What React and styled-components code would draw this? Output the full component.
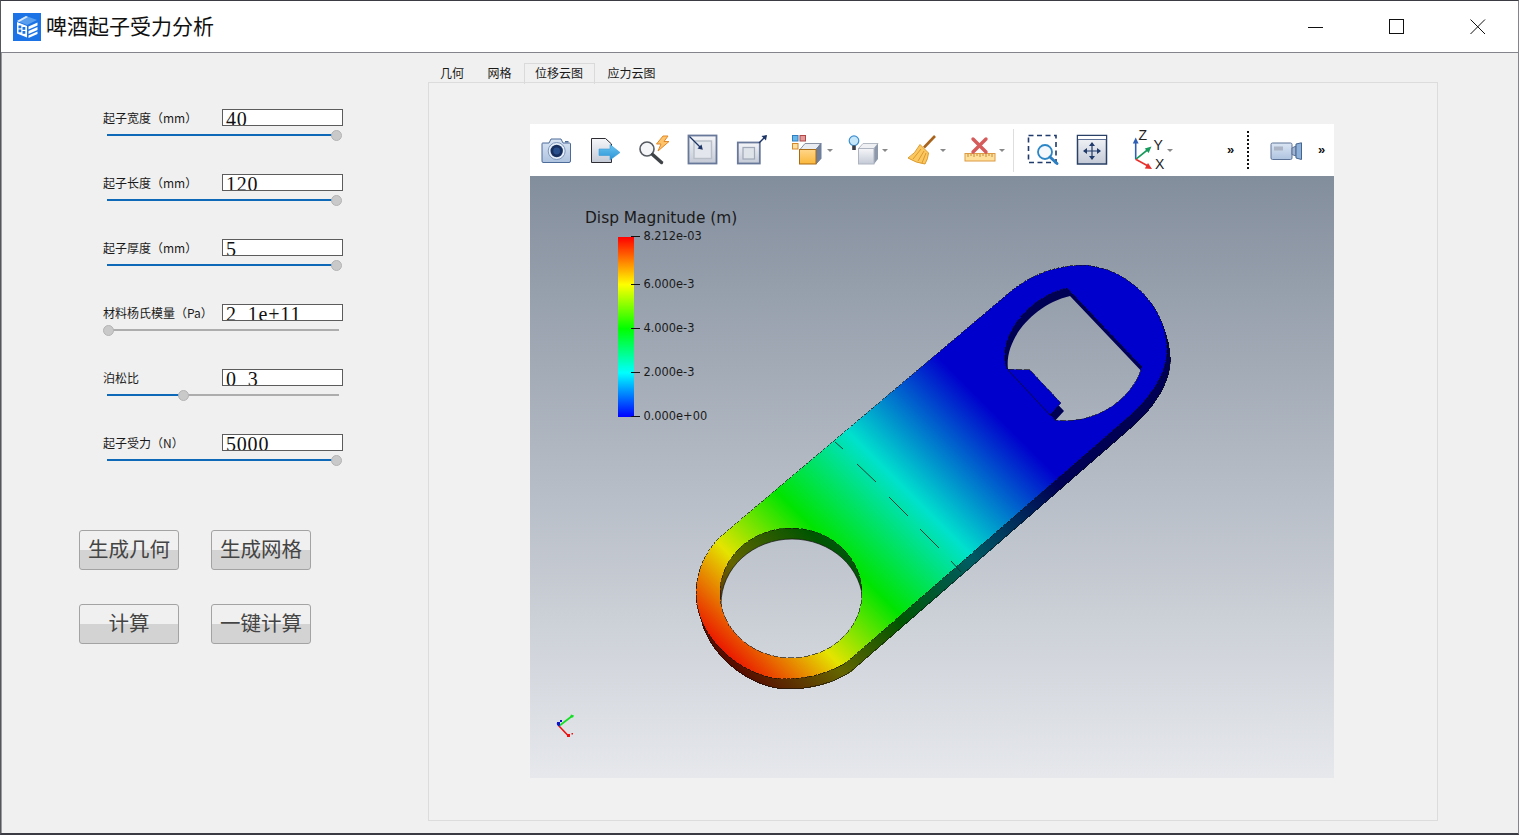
import React from "react";
import styled, { createGlobalStyle } from "styled-components";

const Global = createGlobalStyle`
  html, body { margin: 0; padding: 0; background: #f0f0f0; }
  body { font-family: "Noto Sans CJK SC", "Liberation Sans", sans-serif; }
  * { box-sizing: border-box; }
`;

const Win = styled.div`
  width: 1519px; height: 835px; display: flex; flex-direction: column;
  border-top: 1px solid #3b3b44; border-left: 1px solid #55555c; border-right: 1px solid #85858c;
  border-bottom: 2px solid #3b3b44; background: #f0f0f0; overflow: hidden;
`;
const TitleBar = styled.header`
  height: 52px; flex: none; display: flex; align-items: center; background: #fff;
  border-bottom: 1px solid #84858c; padding-left: 12px;
`;
const TitleText = styled.h1`
  margin: -4px 0 0 5px; font-size: 21px; font-weight: 400; color: #111; line-height: 28px; flex: 1;
`;
const WinBtn = styled.button`
  width: 81px; height: 51px; border: 0; background: transparent; padding: 0;
  display: flex; align-items: center; justify-content: center;
`;
const Body = styled.main`
  flex: 1; display: flex; min-height: 0; border-left: 1px solid #9a9a9e;
`;
const LeftPanel = styled.section`
  width: 426px; flex: none; padding: 56px 0 0 101px; display: flex; flex-direction: column;
`;
const ParamRow = styled.div`
  height: 65px; display: flex; flex-direction: column;
`;
const ParamHead = styled.div`
  display: flex; align-items: center; height: 17px;
`;
const ParamLabel = styled.label`
  width: 119px; flex: none; font-size: 12px; line-height: 17px; color: #1a1a1a; white-space: nowrap;
`;
const ValueBox = styled.div`
  width: 121px; height: 17px; flex: none; background: #fff; border: 1px solid #5c5c5c; overflow: hidden;
  padding: 0 0 0 3px; font-family: "Liberation Serif", serif; font-size: 20px; line-height: 19px;
  letter-spacing: 0.8px; color: #111; white-space: nowrap;
`;
const Dot = styled.span`
  display: inline-block; width: 11px; transform: translateY(2px);
`;
const Track = styled.div`
  position: relative; width: 232px; height: 2px; margin: 8px 0 0 4px; background: #adadad;
`;
const TrackFill = styled.div`
  height: 2px; background: #0f69b9;
`;
const Knob = styled.span`
  position: absolute; top: -4.5px; width: 11px; height: 11px; margin-left: -5.5px; border-radius: 50%;
  background: #c9c9c9; border: 1px solid #b4b4b4;
`;
const ButtonGrid = styled.div`
  display: grid; grid-template-columns: 100px 100px; grid-auto-rows: 40px; column-gap: 32px; row-gap: 34px;
  margin: 31px 0 0 -24px;
`;
const ActionBtn = styled.button`
  border: 1px solid #a3a3a3; border-radius: 3px; padding: 0 0 4px;
  background: linear-gradient(#f0f0f0 0 50%, #d3d3d3 50% 100%);
  font-family: "Noto Sans CJK SC", sans-serif; font-size: 20.5px; font-weight: 400; color: #444; line-height: 32px;
`;
const RightPanel = styled.section`
  flex: 1; padding-top: 10px; display: flex; flex-direction: column; align-items: flex-start;
`;
const Tabs = styled.nav`
  display: flex; height: 20px; padding-left: 1px; margin-bottom: -1px; position: relative;
`;
const Tab = styled.div`
  height: 21px; padding: 0 11px 0 10px; margin-right: ${p => (p.$active ? 1.5 : 0.5)}px; font-size: 12px; line-height: 17px; color: #1a1a1a;
  border: 1px solid ${p => (p.$active ? "#dadada" : "transparent")};
  border-bottom: 0;
`;
const Pane = styled.div`
  width: 1010px; height: 739px; border: 1px solid #dcdcdc; background: #f1f1f1; padding: 41px 0 0 101px;
`;
const Viewport = styled.div`
  width: 804px; height: 654px; display: flex; flex-direction: column;
`;
const Toolbar = styled.div`
  height: 52px; flex: none; background: #fff; display: flex; align-items: center; padding-left: 10px;
`;
const Tool = styled.div`
  display: flex; align-items: center; margin-left: ${p => p.$gap || 0}px; flex: none;
`;
const Caret = styled.span`
  width: 0; height: 0; margin: 1px 0 0 3px; border-left: 3px solid transparent; border-right: 3px solid transparent;
  border-top: 3px solid #888;
`;
const Separator = styled.div`
  width: 1px; height: 43px; background: #dedede; margin-left: 8px; flex: none;
`;
const DottedBar = styled.div`
  width: 2px; height: 38px; margin-left: 12px; flex: none;
  background: repeating-linear-gradient(#111 0 2px, transparent 2px 4px);
`;
const More = styled.span`
  font-family: "Liberation Sans", sans-serif; font-weight: 700; font-size: 13px; line-height: 14px; width: 8px;
  margin-left: ${p => p.$gap}px; color: #111; flex: none;
`;
const RenderSvg = styled.svg`
  display: block; width: 804px; height: 602px; flex: none;
`;
const Icon = styled.svg`
  display: block; width: 32px; height: 32px; overflow: visible; flex: none;
`;

const params = [
  ["起子宽度（mm）", "40", 100],
  ["起子长度（mm）", "120", 100],
  ["起子厚度（mm）", "5", 100],
  ["材料杨氏模量（Pa）", "2.1e+11", 0],
  ["泊松比", "0.3", 33],
  ["起子受力（N）", "5000", 100],
];

const Logo = () => (
  <svg width="28" height="28" viewBox="0 0 28 28">
    <rect width="28" height="28" fill="#1b73e6" />
    <path d="M4 8 L13 3 L24 7 L14 12Z" fill="#5a9fee" />
    <path d="M4 8 L13 3 L15 4 L6 9Z" fill="#d8e8fb" />
    <path d="M4 9 L14 13 L14 24.5 L4 20.5Z" fill="#fff" />
    <rect x="5.5" y="12.5" width="2.8" height="2.8" fill="#1b73e6" />
    <rect x="9.5" y="14" width="2.8" height="2.8" fill="#1b73e6" />
    <rect x="5.5" y="16.5" width="2.8" height="2.8" fill="#1b73e6" />
    <rect x="9.5" y="18" width="2.8" height="2.8" fill="#1b73e6" />
    <path d="M15.5 13.5 L24.5 9.5 V12.5 L15.5 16.5Z M15.5 18 L24.5 14 V17 L15.5 21Z M15.5 22.5 L24.5 18.5 V21 L15.5 25Z" fill="#fff" />
  </svg>
);

const IconDefs = () => (
  <svg width="0" height="0" style={{ position: "absolute" }}>
    <defs>
      <linearGradient id="gSteel" x1="0" y1="0" x2="0" y2="1">
        <stop offset="0" stopColor="#f5f6f9" />
        <stop offset="1" stopColor="#c4cad6" />
      </linearGradient>
      <linearGradient id="gBlueBody" x1="0" y1="0" x2="0" y2="1">
        <stop offset="0" stopColor="#dbe6f4" />
        <stop offset="1" stopColor="#aec3df" />
      </linearGradient>
      <linearGradient id="gOrange" x1="0" y1="0" x2="0" y2="1">
        <stop offset="0" stopColor="#ffd68a" />
        <stop offset="1" stopColor="#fbb73a" />
      </linearGradient>
      <linearGradient id="gArrow" x1="0" y1="0" x2="0" y2="1">
        <stop offset="0" stopColor="#6cc4f0" />
        <stop offset="1" stopColor="#2a94d6" />
      </linearGradient>
    </defs>
  </svg>
);

const CameraIcon = () => (
  <Icon viewBox="0 0 32 32">
    <path d="M2.5 9 H9 L11 5 H21 L23 9 H29.5 Q30.5 9 30.5 10 V27 Q30.5 28.5 29 28.5 H3 Q2 28.5 2 27 V10 Q2 9 2.5 9Z" fill="url(#gBlueBody)" stroke="#4d6b99" />
    <rect x="25" y="7" width="3.5" height="1.5" fill="#4d6b99" />
    <circle cx="16.7" cy="17" r="8.5" fill="#e6eef8" stroke="#7f97bd" />
    <circle cx="16.7" cy="17" r="6.2" fill="#17305f" />
    <circle cx="16.7" cy="17" r="3.4" fill="#2a4f8d" />
  </Icon>
);
const ExportIcon = () => (
  <Icon viewBox="0 0 32 32">
    <path d="M2.5 4.5 H16.5 L22.5 10 V28.5 H2.5Z" fill="url(#gSteel)" stroke="#2d2d33" />
    <path d="M10 15 H21 V10.5 L31 18.5 L21 26 V21.5 H10Z" fill="url(#gArrow)" stroke="#3a9ad6" strokeWidth=".6" />
  </Icon>
);
const SparkLensIcon = () => (
  <Icon viewBox="0 0 32 32">
    <path d="M25 2 L18.5 10 H23 L20 17 L31 7.5 H26 L30 2Z" fill="#ffc46a" stroke="#e2892a" strokeWidth="1" />
    <circle cx="9" cy="15" r="7" fill="#f4f6f8" stroke="#555a60" strokeWidth="1.6" />
    <path d="M14.5 20.5 L23.5 28.5" stroke="#3f4347" strokeWidth="3.4" strokeLinecap="round" />
  </Icon>
);
const FitInIcon = () => (
  <Icon viewBox="0 0 32 32">
    <rect x="1.5" y="1.5" width="28" height="28" fill="url(#gSteel)" stroke="#68789a" strokeWidth="1.8" />
    <rect x="7" y="7" width="17.5" height="17.5" fill="#e3e6ec" stroke="#b8bfc9" strokeWidth="1.4" />
    <path d="M2.5 2.5 L14 14" stroke="#1c3566" strokeWidth="1.3" />
    <path d="M15.8 15.8 L10.5 14.5 L14.5 10.5Z" fill="#1c3566" />
  </Icon>
);
const FitOutIcon = () => (
  <Icon viewBox="0 0 32 32">
    <rect x="1.8" y="8.5" width="22" height="21" fill="url(#gSteel)" stroke="#68789a" strokeWidth="1.8" />
    <rect x="7" y="13.5" width="11.5" height="11.5" fill="#dfe3ea" stroke="#9fa9b8" strokeWidth="1.2" />
    <path d="M23 9 L30 2" stroke="#1c3566" strokeWidth="1.3" />
    <path d="M31 1 L30 6.5 L25.5 2Z" fill="#1c3566" />
  </Icon>
);
const CubeSelectIcon = () => (
  <Icon viewBox="0 0 32 32">
    <rect x=".5" y="1.5" width="5.5" height="5.5" fill="#69b7e8" stroke="#2f7fc0" />
    <rect x="8" y="1.5" width="5.5" height="5.5" fill="#e39a9a" stroke="#b04646" />
    <rect x=".5" y="9.5" width="5.5" height="5.5" fill="#ffdf9f" stroke="#d4862a" />
    <path d="M8 15.5 L13 9.5 H29 L24 15.5Z" fill="#e9ecf1" stroke="#8a93a4" />
    <path d="M24 15.5 L29 9.5 V24.5 L24 30Z" fill="#6f7f9c" stroke="#6f7f9c" />
    <rect x="7.5" y="15.5" width="16.5" height="14.5" fill="url(#gOrange)" stroke="#a96c16" />
  </Icon>
);
const CubeLightIcon = () => (
  <Icon viewBox="0 0 32 32">
    <path d="M11.5 14.5 L16 9.5 H31 L27 14.5Z" fill="#eef0f3" stroke="#b4bac4" />
    <path d="M27 14.5 L31 9.5 V25 L27 30Z" fill="#8e98ab" />
    <rect x="11.5" y="14.5" width="15.5" height="15.5" fill="url(#gSteel)" stroke="#aeb5c1" />
    <circle cx="7" cy="6.7" r="4.8" fill="#c6e6fa" stroke="#3d8fd0" strokeWidth="1.2" />
    <rect x="5.2" y="11.5" width="3.6" height="4.5" fill="#3c3f48" />
  </Icon>
);
const BroomIcon = () => (
  <Icon viewBox="0 0 32 32">
    <path d="M30 2 L19 13.5" stroke="#a9641c" strokeWidth="2.6" />
    <path d="M15 10.5 L23.5 19 Q23 25 20 30 Q11 29 3 24 Q10 20 15 10.5Z" fill="#fbc85f" stroke="#dc9a2e" />
    <path d="M16 15 L8 25 M19 17 L13 27 M21 19 L17 29" stroke="#d9922a" strokeWidth=".9" />
  </Icon>
);
const RulerXIcon = () => (
  <Icon viewBox="0 0 32 32">
    <rect x="1" y="19.5" width="30" height="7.5" fill="#ffe09b" stroke="#dd9a45" />
    <path d="M4 20 v3 M7 20 v2 M10 20 v3 M13 20 v2 M16 20 v3 M19 20 v2 M22 20 v3 M25 20 v2 M28 20 v3" stroke="#b8751f" strokeWidth=".8" />
    <path d="M9 5 L22 18 M22 5 L9 18" stroke="#d65b5b" strokeWidth="3.4" strokeLinecap="round" />
  </Icon>
);
const ZoomBoxIcon = () => (
  <Icon viewBox="0 0 32 32">
    <rect x="1.5" y="1.5" width="27.5" height="27" fill="none" stroke="#1f3a6b" strokeWidth="1.6" strokeDasharray="5 3.5" />
    <circle cx="18" cy="18" r="7" fill="#f4f8fc" stroke="#2c86c6" strokeWidth="1.8" />
    <path d="M23 23 L30 29.5" stroke="#2c7fc0" strokeWidth="3" strokeLinecap="round" />
  </Icon>
);
const PanIcon = () => (
  <Icon viewBox="0 0 32 32">
    <rect x="1.5" y="1.5" width="29" height="28.5" fill="url(#gSteel)" stroke="#2a4066" strokeWidth="1.5" />
    <rect x="2" y="2" width="28" height="3" fill="#fff" />
    <path d="M2 5.5 H30" stroke="#5e7196" />
    <path d="M16 9 V25 M8 17 H24" stroke="#1f3a6b" strokeWidth="1.2" />
    <path d="M16 8 L13 12 H19Z M16 26 L13 22 H19Z M7 17 L11 14 V20Z M25 17 L21 14 V20Z" fill="#1f3a6b" />
  </Icon>
);
const AxesIcon = () => (
  <Icon viewBox="0 0 32 32">
    <path d="M3.7 25.3 V8" stroke="#2f5fb4" strokeWidth="1.6" />
    <path d="M3.7 3.5 L.8 9.5 H6.6Z" fill="#2f5fb4" />
    <path d="M3.7 25.3 L16 15.5" stroke="#179a5c" strokeWidth="1.6" />
    <path d="M19.5 12.5 L12.8 14.5 L16.6 19Z" fill="#179a5c" />
    <path d="M3.7 25.3 L16 32" stroke="#e8302c" strokeWidth="1.6" />
    <path d="M20 35 L12.8 34.5 L16 29Z" fill="#e8302c" />
    <text x="6.5" y="6" fontFamily="Liberation Sans, sans-serif" fontSize="14" fill="#222">Z</text>
    <text x="21.5" y="16" fontFamily="Liberation Sans, sans-serif" fontSize="14" fill="#222">Y</text>
    <text x="23" y="34.5" fontFamily="Liberation Sans, sans-serif" fontSize="14" fill="#222">X</text>
  </Icon>
);
const VideoIcon = () => (
  <Icon viewBox="0 0 32 32">
    <rect x="1" y="9" width="21" height="16.5" rx="1.5" fill="url(#gBlueBody)" stroke="#5c7296" />
    <rect x="4" y="12.5" width="9" height="4" fill="#aab4c4" />
    <path d="M22 14 L26 12 V22 L22 20.5Z" fill="#9fb2cf" stroke="#5c7296" />
    <path d="M26 10 L31.5 8.8 V25.5 L26 24Z" fill="#8fb0d8" stroke="#45648f" />
  </Icon>
);

const outline = "M720 537 L1010 292 C1030 275 1055 266 1080 265 C1125 265 1167 305 1167 350 C1167 372 1152 395 1133 413 L847 662 C828 674 805 679 785 679 C745 679 696 640 696 593 C696 572 705 552 720 537Z";
const smallHole = "M720 593 a71 65 0 1 0 142 0 a71 65 0 1 0 -142 0Z";
const bigHole = "M1007 369 C996 340 1025 298 1067 288 L1142 367 C1132 400 1095 425 1055 420 L1050 415 L1061 403 L1030 370Z";
const sweep = [1, 2, 3, 4, 5, 6, 7, 8, 9, 10];
const meshDashes = [
  [835, 442, 843, 449], [857, 464, 876, 482], [889, 497, 908, 516], [920, 529, 939, 548], [951, 561, 961, 572],
];
const ticks = [
  [237, 239.5, "8.212e-03"], [285, 288, "6.000e-3"], [329, 332, "4.000e-3"], [373, 376, "2.000e-3"], [417, 419.5, "0.000e+00"],
];

const Opener = () => (
  <RenderSvg viewBox="530 176 804 602">
    <defs>
      <linearGradient id="bg" gradientUnits="userSpaceOnUse" x1="0" y1="176" x2="0" y2="778">
        <stop offset="0" stopColor="#838e9d" />
        <stop offset="1" stopColor="#e6e8ec" />
      </linearGradient>
      <linearGradient id="surf" gradientUnits="userSpaceOnUse" x1="600" y1="600" x2="950" y2="250">
        <stop offset=".0857" stopColor="rgb(235,0,0)" />
        <stop offset=".25" stopColor="rgb(228,228,0)" />
        <stop offset=".407" stopColor="rgb(0,228,0)" />
        <stop offset=".594" stopColor="rgb(0,225,205)" />
        <stop offset=".83" stopColor="rgb(0,0,205)" />
      </linearGradient>
      <linearGradient id="side" gradientUnits="userSpaceOnUse" x1="600" y1="600" x2="950" y2="250">
        <stop offset=".0857" stopColor="rgb(85,0,0)" />
        <stop offset=".25" stopColor="rgb(100,100,0)" />
        <stop offset=".407" stopColor="rgb(0,85,0)" />
        <stop offset=".594" stopColor="rgb(0,92,98)" />
        <stop offset=".83" stopColor="rgb(0,0,85)" />
      </linearGradient>
      <linearGradient id="bar" x1="0" y1="0" x2="0" y2="1">
        <stop offset="0" stopColor="#ff0000" />
        <stop offset=".265" stopColor="#ffff00" />
        <stop offset=".51" stopColor="#00ff00" />
        <stop offset=".755" stopColor="#00ffff" />
        <stop offset="1" stopColor="#0000ff" />
      </linearGradient>
      <clipPath id="clipSmall"><path d={smallHole} /></clipPath>
      <clipPath id="clipBig"><path d={bigHole} /></clipPath>
    </defs>
    <rect x="530" y="176" width="804" height="602" fill="url(#bg)" />

    {sweep.map(i => (
      <path key={i} d={outline} fill="url(#side)" stroke="url(#side)" transform={`translate(${i * 0.32} ${i})`} shapeRendering="crispEdges" />
    ))}
    <path d={outline} transform="translate(3.2 10)" fill="none" stroke="#111" strokeWidth=".6" shapeRendering="crispEdges" />
    <path d={`${outline} ${smallHole} ${bigHole}`} fill="url(#surf)" fillRule="evenodd" shapeRendering="crispEdges" />
    <g clipPath="url(#clipSmall)">
      <path d={smallHole} transform="translate(1 11)" fill="url(#bg)" stroke="#111" strokeWidth=".7" />
    </g>
    <g clipPath="url(#clipBig)">
      <path d={bigHole} transform="translate(3 8)" fill="url(#bg)" />
    </g>
    <path d={outline} fill="none" stroke="#111" strokeWidth=".7" strokeDasharray="3 1.5" shapeRendering="crispEdges" />
    <path d={`${smallHole} ${bigHole}`} fill="none" stroke="#111" strokeWidth=".6" strokeDasharray="6 2" shapeRendering="crispEdges" />
    <path d="M1008 370 L1050 415" stroke="#111" strokeWidth=".7" />
    {meshDashes.map(([a, b, c, d]) => (
      <line key={a} x1={a} y1={b} x2={c} y2={d} stroke="#10302c" strokeWidth=".9" />
    ))}

    <text x="585" y="223" fontFamily="DejaVu Sans, sans-serif" fontSize="15.4" fill="#1a1a1a">Disp Magnitude (m)</text>
    <rect x="618" y="237" width="16" height="180" fill="url(#bar)" />
    {ticks.map(([y, ty, t]) => (
      <g key={t}>
        <line x1="631" y1={y - 0.5} x2="640" y2={y - 0.5} stroke="#111" />
        <text x="643.5" y={ty} fontFamily="DejaVu Sans, sans-serif" fontSize="11.4" fill="#1a1a1a">{t}</text>
      </g>
    ))}

    <path d="M559 726 L571.5 716.5" stroke="#10e020" strokeWidth="1.6" />
    <path d="M571 714.5 l3 1 -1 2 -3 0z" fill="#10e020" />
    <path d="M559 726 L568.5 736" stroke="#ee1010" strokeWidth="1.6" />
    <path d="M567 734 h3 v3 h-3z M571.5 733 h1.5 v1.5 h-1.5z" fill="#ee1010" />
    <path d="M559 726 L557.5 723" stroke="#1010d0" strokeWidth="2" />
    <path d="M557 722 h3 v3 h-3z M560 720 h2 v2 h-2z" fill="#1010d0" />
  </RenderSvg>
);

const Value = ({ text }) => {
  const [head, tail] = text.split(".");
  if (tail === undefined) return <ValueBox>{text}</ValueBox>;
  return <ValueBox>{head}<Dot>.</Dot>{tail}</ValueBox>;
};

export default function App() {
  return (
    <>
      <Global />
      <IconDefs />
      <Win>
        <TitleBar>
          <Logo />
          <TitleText>啤酒起子受力分析</TitleText>
          <WinBtn aria-label="最小化">
            <svg width="16" height="16" viewBox="0 0 16 16"><path d="M0 8.5 H15" stroke="#111" /></svg>
          </WinBtn>
          <WinBtn aria-label="最大化">
            <svg width="16" height="16" viewBox="0 0 16 16"><rect x=".5" y=".5" width="14" height="14" fill="none" stroke="#111" /></svg>
          </WinBtn>
          <WinBtn aria-label="关闭">
            <svg width="16" height="16" viewBox="0 0 16 16"><path d="M.5 .5 L15 15 M15 .5 L.5 15" stroke="#111" /></svg>
          </WinBtn>
        </TitleBar>
        <Body>
          <LeftPanel>
            {params.map(([label, value, pct]) => (
              <ParamRow key={label}>
                <ParamHead>
                  <ParamLabel>{label}</ParamLabel>
                  <Value text={value} />
                </ParamHead>
                <Track>
                  <TrackFill style={{ width: `${1.5 + pct * 2.28}px` }} />
                  <Knob style={{ left: `${1.5 + pct * 2.28}px` }} />
                </Track>
              </ParamRow>
            ))}
            <ButtonGrid>
              <ActionBtn>生成几何</ActionBtn>
              <ActionBtn>生成网格</ActionBtn>
              <ActionBtn>计算</ActionBtn>
              <ActionBtn>一键计算</ActionBtn>
            </ButtonGrid>
          </LeftPanel>
          <RightPanel>
            <Tabs>
              <Tab>几何</Tab>
              <Tab>网格</Tab>
              <Tab $active>位移云图</Tab>
              <Tab>应力云图</Tab>
            </Tabs>
            <Pane>
              <Viewport>
                <Toolbar>
                  <Tool><CameraIcon /></Tool>
                  <Tool $gap={17}><ExportIcon /></Tool>
                  <Tool $gap={17}><SparkLensIcon /></Tool>
                  <Tool $gap={17}><FitInIcon /></Tool>
                  <Tool $gap={17}><FitOutIcon /></Tool>
                  <Tool $gap={24}><CubeSelectIcon /><Caret /></Tool>
                  <Tool $gap={14}><CubeLightIcon /><Caret /></Tool>
                  <Tool $gap={17}><BroomIcon /><Caret /></Tool>
                  <Tool $gap={18}><RulerXIcon /><Caret /></Tool>
                  <Separator />
                  <Tool $gap={13}><ZoomBoxIcon /></Tool>
                  <Tool $gap={17}><PanIcon /></Tool>
                  <Tool $gap={24}><AxesIcon /><Caret /></Tool>
                  <More $gap={54}>»</More>
                  <DottedBar />
                  <Tool $gap={21}><VideoIcon /></Tool>
                  <More $gap={16}>»</More>
                </Toolbar>
                <Opener />
              </Viewport>
            </Pane>
          </RightPanel>
        </Body>
      </Win>
    </>
  );
}
